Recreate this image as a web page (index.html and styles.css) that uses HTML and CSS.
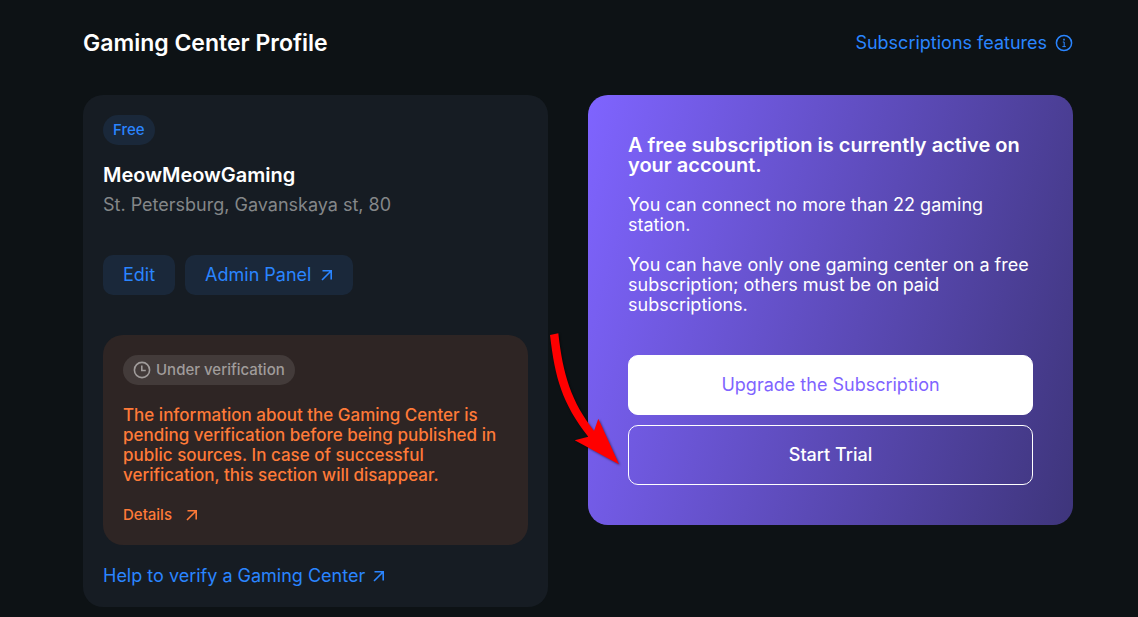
FILE: index.html
```
<!DOCTYPE html>
<html lang="en">
<head>
    <meta charset="UTF-8">
    <meta name="viewport" content="width=device-width, initial-scale=1.0">
    <title>Gaming Center Profile</title>
    <link rel="stylesheet" href="styles.css">
</head>
<body>
    <div class="page">
        <header class="header">
            <h1>Gaming Center Profile</h1>
            <a class="link" href="#">
                Subscriptions features
                <svg class="icon-round" viewBox="0 0 18 18" fill="none" stroke="currentColor">
                    <circle cx="9" cy="9" r="7.6" stroke-width="1.5"/>
                    <path d="M7.8 8h1.4v4.6M7.4 12.6h3.4" stroke-width="1"/>
                    <path d="M9 4.8v1.7" stroke-width="1.6"/>
                </svg>
            </a>
        </header>

        <main class="content">
            <section class="card">
                <span class="badge badge-free">Free</span>
                <h2>MeowMeowGaming</h2>
                <p class="address">St. Petersburg, Gavanskaya st, 80</p>
                <div class="buttons">
                    <button class="btn" type="button">Edit</button>
                    <button class="btn" type="button">
                        Admin Panel
                        <svg class="icon-arrow" viewBox="0 0 12 12" fill="none" stroke="currentColor" stroke-width="1.6">
                            <path d="M1.5 1.8h8.7v8.7M10 2L1 11"/>
                        </svg>
                    </button>
                </div>

                <div class="notice">
                    <span class="badge badge-wait">
                        <svg class="icon-round" viewBox="0 0 18 18" fill="none" stroke="currentColor" stroke-width="1.6">
                            <circle cx="9" cy="9" r="7.6"/>
                            <path d="M8.8 4.5v5h4"/>
                        </svg>
                        Under verification
                    </span>
                    <p>The information about the Gaming Center is pending verification before being published in public sources. In case of successful verification, this section will disappear.</p>
                    <a class="details" href="#">
                        Details
                        <svg class="icon-arrow" viewBox="0 0 12 12" fill="none" stroke="currentColor" stroke-width="1.6">
                            <path d="M1.5 1.8h8.7v8.7M10 2L1 11"/>
                        </svg>
                    </a>
                </div>

                <a class="link" href="#">
                    Help to verify a Gaming Center
                    <svg class="icon-arrow" viewBox="0 0 12 12" fill="none" stroke="currentColor" stroke-width="1.6">
                        <path d="M1.5 1.8h8.7v8.7M10 2L1 11"/>
                    </svg>
                </a>
            </section>

            <section class="plan">
                <h2>A free subscription is currently active on your account.</h2>
                <p>You can connect no more than 22 gaming station.</p>
                <p>You can have only one gaming center on a free subscription; others must be on paid subscriptions.</p>
                <div class="plan-actions">
                    <button class="plan-btn upgrade" type="button">Upgrade the Subscription</button>
                    <button class="plan-btn trial" type="button">Start Trial</button>
                    <svg class="pointer" viewBox="0 0 80 145" fill="#ff0000">
                        <path d="M5 10L13.3 8.3C18 50 26 76 49 106L53.3 93.7L74 139.3L29.7 115.3L43.3 111.7C17 78 10 53 5 10Z"/>
                    </svg>
                </div>
            </section>
        </main>
    </div>
</body>
</html>
```
FILE: styles.css
```
:root {
    --background-color: #0d1215;
    --card-color: #161c23;
    --button-color: #1a283a;
    --blue: #2a85ff;
    --orange: #ff7a38;
    --purple: #7f64ff;
}

* {
    box-sizing: border-box;
}

body {
    margin: 0;
    background-color: var(--background-color);
    color: white;
    font-family: Inter, 'Liberation Sans', sans-serif;
    font-size: 18px;
    line-height: 20px;
}

h1, h2, p {
    margin: 0;
}

h1 {
    font-size: 23px;
    font-weight: 600;
    line-height: 30px;
}

h2 {
    font-size: 20px;
    font-weight: 600;
}

a {
    text-decoration: none;
}

button {
    font: inherit;
    cursor: pointer;
}

.page {
    padding: 28px 65px 11px 83px;
}

.header {
    display: flex;
    justify-content: space-between;
    align-items: center;
    margin-bottom: 37px;
}

.link {
    display: flex;
    align-items: center;
    gap: 8px;
    color: var(--blue);
    line-height: 22px;
}

.icon-round {
    width: 18px;
    height: 18px;
}

.icon-arrow {
    width: 12px;
    height: 12px;
}

.content {
    display: grid;
    grid-template-columns: 465fr 485fr;
    align-items: start;
    gap: 40px;
}

.card {
    padding: 20px;
    border-radius: 20px;
    background-color: var(--card-color);
}

.badge {
    display: inline-flex;
    align-items: center;
    height: 30px;
    padding: 0 10px;
    border-radius: 15px;
    font-size: 15px;
    font-weight: 500;
    vertical-align: top;
}

.badge-free {
    margin-bottom: 20px;
    background-color: var(--button-color);
    color: var(--blue);
}

.badge-wait {
    gap: 5px;
    margin-bottom: 20px;
    background-color: #433b3a;
    color: #a09c9b;
}

.address {
    margin-top: 10px;
    color: #848789;
}

.buttons {
    display: flex;
    gap: 10px;
    margin: 40px 0;
}

.btn {
    display: flex;
    align-items: center;
    gap: 10px;
    height: 40px;
    padding: 0 20px;
    border: none;
    border-radius: 10px;
    background-color: var(--button-color);
    color: var(--blue);
}

.notice {
    margin-bottom: 20px;
    padding: 20px;
    border-radius: 20px;
    background-color: #2e2524;
    color: var(--orange);
    font-size: 17px;
    font-weight: 500;
}

.details {
    display: flex;
    align-items: center;
    gap: 14px;
    margin-top: 20px;
    color: var(--orange);
    font-size: 15px;
}

.plan {
    padding: 40px;
    border-radius: 20px;
    background: linear-gradient(105deg, #7f64ff, #3e357b);
}

.plan p {
    margin-top: 20px;
}

.plan-actions {
    position: relative;
    display: flex;
    flex-direction: column;
    gap: 10px;
    margin-top: 40px;
}

.plan-btn {
    height: 60px;
    border: 1px solid white;
    border-radius: 10px;
}

.upgrade {
    background-color: white;
    color: var(--purple);
}

.trial {
    background-color: transparent;
    color: white;
    font-weight: 500;
}

/* red arrow pointing at the trial button */
.pointer {
    position: absolute;
    top: -30px;
    left: -83px;
    width: 80px;
    height: 145px;
    filter: drop-shadow(1px 1px 1px rgba(0, 0, 0, 0.5));
    pointer-events: none;
}
```
